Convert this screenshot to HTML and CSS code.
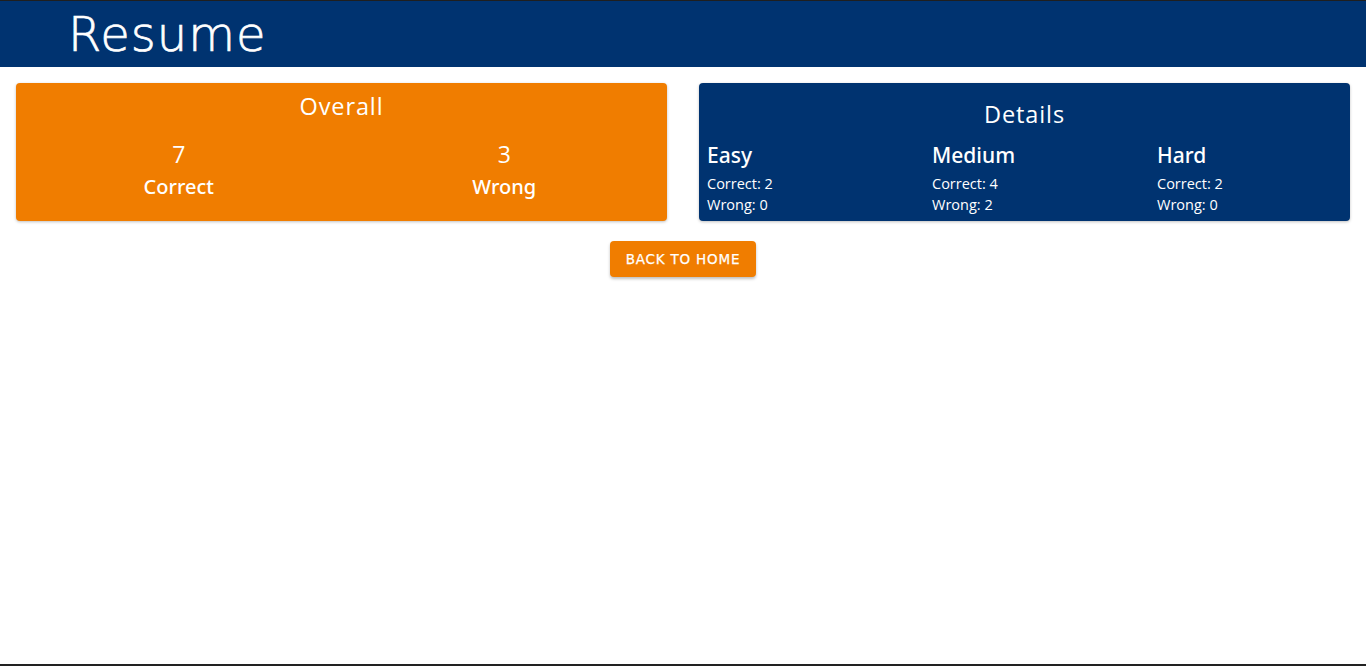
FILE: index.html
```html
<!DOCTYPE html>
<html lang="en">
<head>
<meta charset="utf-8">
<title>Resume</title>
<link rel="stylesheet" href="styles.css">
</head>
<body>
<div class="page">
  <div class="topline"></div>
  <header class="header"><h1 class="title">Resume</h1></header>
  <main class="main">
    <div class="cards">
      <section class="card card-orange">
        <h2 class="card-title">Overall</h2>
        <div class="overall-cols">
          <div class="stat"><div class="stat-num">7</div><div class="stat-label">Correct</div></div>
          <div class="stat"><div class="stat-num">3</div><div class="stat-label">Wrong</div></div>
        </div>
      </section>
      <section class="card card-blue">
        <h2 class="card-title details-title">Details</h2>
        <div class="detail-cols">
          <div class="level"><h3 class="level-name">Easy</h3><div class="level-line">Correct: 2</div><div class="level-line">Wrong: 0</div></div>
          <div class="level"><h3 class="level-name">Medium</h3><div class="level-line">Correct: 4</div><div class="level-line">Wrong: 2</div></div>
          <div class="level"><h3 class="level-name">Hard</h3><div class="level-line">Correct: 2</div><div class="level-line">Wrong: 0</div></div>
        </div>
      </section>
    </div>
    <div class="actions"><button class="btn">BACK TO HOME</button></div>
  </main>
  <div class="bottomline"></div>
</div>
</body>
</html>
```
FILE: styles.css
```css
* { box-sizing: border-box; }
html, body { margin: 0; padding: 0; }
body { font-family: "Open Sans", "Noto Sans", sans-serif; color: #fff; background: #fff; }
.page { min-height: 100vh; display: flex; flex-direction: column; }
.topline { height: 1px; background: #1f1f1f; }
.header { height: 66px; background: #003370; padding-left: 68px; display: flex; align-items: center; }
.title { margin: 0; font-family: "DejaVu Sans", sans-serif; font-weight: 200; font-size: 48px; letter-spacing: 1px; line-height: 1; color: #fff; -webkit-text-stroke: 0.7px #fff; }
.main { flex: 1; padding: 16px; }
.cards { display: flex; gap: 32px; }
.card { flex: 1; height: 138px; border-radius: 4px; box-shadow: 0 1px 3px rgba(0,0,0,0.25); overflow: hidden; }
.card-orange { background: #f07d00; }
.card-blue { background: #003370; }
.card-title { margin: 0; text-align: center; font-weight: 400; font-size: 23.5px; letter-spacing: 0.9px; line-height: 30px; padding-top: 8px; }
.details-title { padding-top: 16px; }
.overall-cols { display: flex; margin-top: 18px; }
.stat { flex: 1; text-align: center; }
.stat-num { font-size: 23px; line-height: 30px; }
.stat-label { font-family: "Noto Sans", "Open Sans", sans-serif; font-size: 20px; font-weight: 500; line-height: 36px; }
.detail-cols { display: grid; grid-template-columns: 225px 225px 225px; padding-left: 8px; margin-top: 10px; }
.level-name { margin: 0 0 2px; font-family: "Noto Sans", "Open Sans", sans-serif; font-size: 21px; font-weight: 500; line-height: 32px; }
.level-line { font-size: 14.5px; line-height: 21px; }
.actions { display: flex; justify-content: center; margin-top: 20px; }
.btn { width: 146px; height: 36px; border: 0; border-radius: 4px; background: #f07d00; color: #fff; font-family: "DejaVu Sans", sans-serif; font-weight: 400; font-size: 13.5px; letter-spacing: 0.8px; -webkit-text-stroke: 0.25px #fff; box-shadow: 0 2px 3px rgba(0,0,0,0.25); padding: 0; }
.bottomline { height: 2px; background: #222; }
```
